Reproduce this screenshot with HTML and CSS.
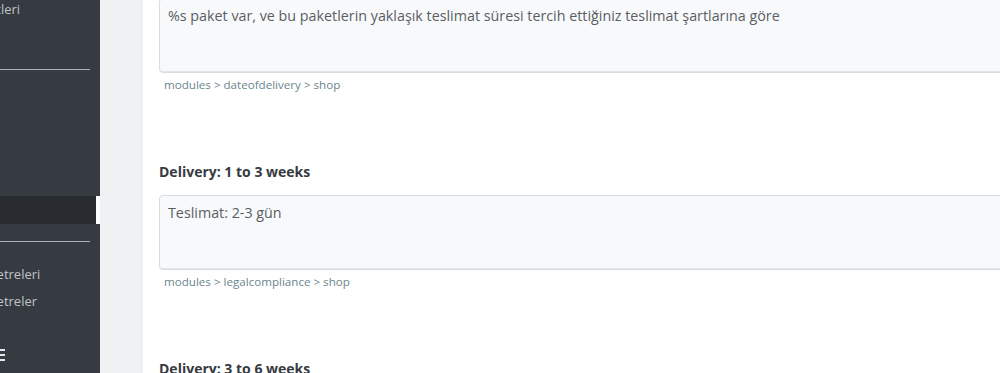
FILE: index.html
```html
<!DOCTYPE html>
<html lang="tr">

<head>
    <meta charset="UTF-8">
    <meta name="viewport" content="width=device-width, initial-scale=1.0">
    <title>Çeviriler</title>
    <link rel="stylesheet" href="styles.css">
</head>

<body>
    <div class="page">
        <!-- sol menü (kaydırılmış halde) -->
        <div class="sidebar">
            <ul class="nav">
                <li class="nav-item">Hizmetleri</li>
                <li class="nav-sep"></li>
                <li class="nav-item"></li>
                <li class="nav-item"></li>
                <li class="nav-item"></li>
                <li class="nav-item active"></li>
                <li class="nav-sep second"></li>
                <li class="nav-item">Parametreleri</li>
                <li class="nav-item">Parametreler</li>
                <li class="nav-item icon">
                    <svg width="14" height="12" viewBox="0 0 14 12">
                        <rect x="0" y="0" width="14" height="2" fill="#e6e8ea" />
                        <rect x="0" y="5" width="14" height="2" fill="#e6e8ea" />
                        <rect x="0" y="10" width="14" height="2" fill="#e6e8ea" />
                    </svg>
                </li>
            </ul>
        </div>

        <div class="main">
            <div class="card">
                <div class="field">
                    <div class="label">Delivery: Order summary</div>
                    <div class="input">%s paket var, ve bu paketlerin yaklaşık teslimat süresi tercih ettiğiniz teslimat şartlarına göre</div>
                    <div class="crumb">modules &gt; dateofdelivery &gt; shop</div>
                </div>
                <div class="field">
                    <div class="label">Delivery: 1 to 3 weeks</div>
                    <div class="input">Teslimat: 2-3 gün</div>
                    <div class="crumb">modules &gt; legalcompliance &gt; shop</div>
                </div>
                <div class="field">
                    <div class="label">Delivery: 3 to 6 weeks</div>
                    <div class="input">Teslimat: 3-6 gün</div>
                    <div class="crumb">modules &gt; legalcompliance &gt; shop</div>
                </div>
            </div>
        </div>
    </div>
</body>

</html>
```

FILE: styles.css
```css
body {
    margin: 0;
    font-family: "Open Sans", "Liberation Sans", sans-serif;
    overflow: hidden;
}

.page {
    display: flex;
    height: 373px;
    overflow: hidden;
}

.sidebar {
    flex: none;
    width: 100px;
    background: #363a41;
    overflow: hidden;
}

.nav {
    list-style: none;
    margin: 0;
    padding: 0;
}

.nav-item {
    height: 27px;
    line-height: 27px;
    font-size: 13px;
    color: #bfc3c7;
    white-space: nowrap;
    text-indent: -42px;
}

.nav-item:first-child {
    margin-top: -4px;
}

.nav-sep {
    height: 1px;
    margin: 46px 10px 0 0;
    background: #aab2b8;
}

.nav-sep + .nav-item {
    margin-top: 7px;
}

.nav-item.active {
    height: 28px;
    margin-top: 38px;
    background: #282b30;
    border-right: 4px solid #fff;
}

.nav-sep.second {
    margin-top: 17px;
}

.nav-sep.second + .nav-item {
    margin-top: 19px;
    text-indent: -43px;
}

.nav-sep.second + .nav-item + .nav-item {
    text-indent: -43px;
}

.nav-item.icon {
    margin-top: 25px;
    text-indent: 0;
    margin-left: -9px;
}

.nav-item.icon svg {
    vertical-align: middle;
}

.main {
    flex: none;
    width: 1100px;
    background: #eff1f2;
    padding-left: 43px;
}

.card {
    background: #fff;
    min-height: 440px;
    padding: 0 16px;
    margin-top: -35px;
}

.field {
    margin-bottom: 70px;
}

.label {
    height: 19px;
    line-height: 19px;
    font-size: 14px;
    font-weight: bold;
    color: #363a41;
    margin-bottom: 14px;
}

.input {
    box-sizing: border-box;
    height: 75px;
    padding: 7px 8px 5px;
    font-size: 14.3px;
    line-height: 20px;
    color: #5a5e63;
    background: #f8f9fb;
    border: 1px solid #d7dde1;
    border-radius: 4px;
    box-shadow: inset 0 -1px 0 #e2e5e8;
}

.crumb {
    margin-top: 4px;
    padding-left: 5px;
    height: 15px;
    line-height: 15px;
    font-size: 11.6px;
    color: #6c868e;
}
```
